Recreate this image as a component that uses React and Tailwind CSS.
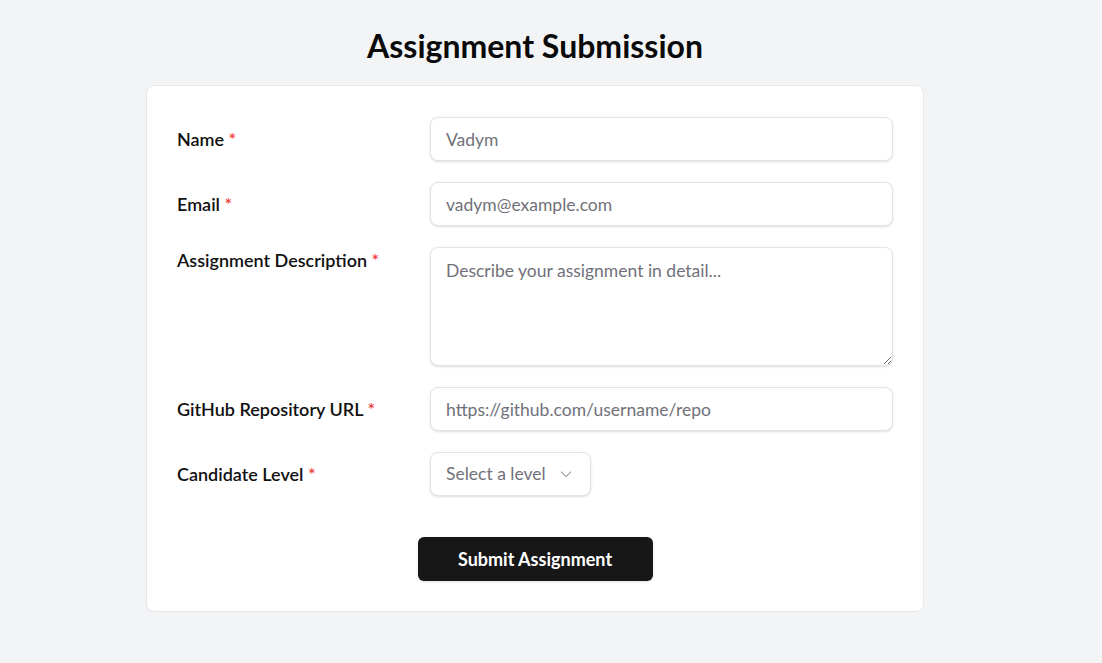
import React from 'react'

const font = { fontFamily: 'Lato, "Noto Sans", sans-serif' }

function Field({ label, align = 'items-center', children }) {
  return (
    <div className={`flex ${align}`}>
      <label className="w-[253px] shrink-0 text-[18px] font-semibold text-[#111111]">
        {label} <span className="text-[#ef4444]">*</span>
      </label>
      <div className="flex-1">{children}</div>
    </div>
  )
}

const inputCls =
  'w-full h-[44px] rounded-lg border border-[#e4e4e7] bg-white px-[15px] text-[17.5px] text-[#111] placeholder:text-[#71717a] shadow-sm outline-none'

export default function App() {
  return (
    <div className="min-h-screen bg-[#f3f4f6] pt-[27px] pr-[32px]" style={font}>
      <h1 className="text-center text-[32px] font-bold text-[#0a0a0a] leading-[38px]">
        Assignment Submission
      </h1>
      <form className="mx-auto mt-[20px] w-[778px] rounded-lg border border-[#e5e7eb] bg-white px-[30px] pt-[31px] pb-[30px]">
        <div className="flex flex-col gap-[21px]">
          <Field label="Name">
            <input className={inputCls} placeholder="Vadym" />
          </Field>
          <Field label="Email">
            <input className={inputCls} placeholder="vadym@example.com" />
          </Field>
          <Field label="Assignment Description" align="items-start">
            <textarea
              className="block w-full h-[119px] rounded-lg border border-[#e4e4e7] bg-white px-[15px] py-[10px] text-[17.5px] placeholder:text-[#71717a] shadow-sm outline-none"
              placeholder="Describe your assignment in detail..."
            />
          </Field>
          <Field label="GitHub Repository URL">
            <input className={inputCls} placeholder="https://github.com/username/repo" />
          </Field>
          <Field label="Candidate Level">
            <button
              type="button"
              className="flex h-[44px] w-[161px] items-center gap-[12px] rounded-lg border border-[#e4e4e7] bg-white pl-[15px] text-[17.5px] text-[#71717a] shadow-sm"
            >
              <span>Select a level</span>
              <svg width="16" height="16" viewBox="0 0 24 24" fill="none" stroke="#a1a1aa" strokeWidth="1.6" strokeLinecap="round" strokeLinejoin="round">
                <path d="m5 9 7 7 7-7" />
              </svg>
            </button>
          </Field>
        </div>
        <div className="mt-[41px] flex justify-center">
          <button
            type="submit"
            className="h-[44px] w-[235px] rounded-md bg-[#171717] text-[18px] font-bold text-white shadow-sm"
          >
            Submit Assignment
          </button>
        </div>
      </form>
    </div>
  )
}
